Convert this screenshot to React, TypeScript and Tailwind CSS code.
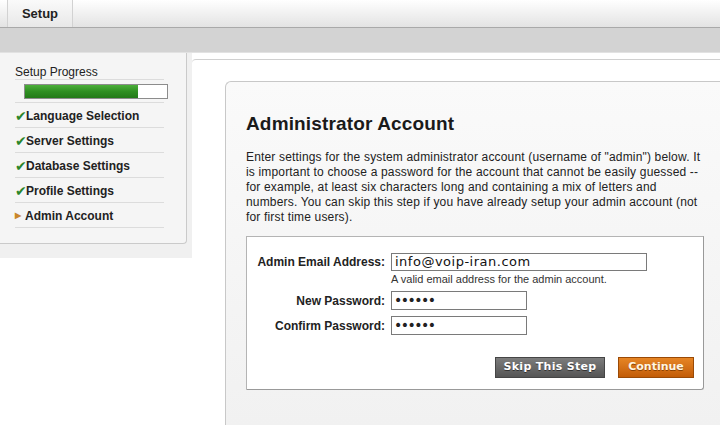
const steps = [
  { label: 'Language Selection', done: true },
  { label: 'Server Settings', done: true },
  { label: 'Database Settings', done: true },
  { label: 'Profile Settings', done: true },
  { label: 'Admin Account', done: false },
];

const arial = { fontFamily: '"Liberation Sans", Arial, sans-serif' };
const verdana = { fontFamily: '"DejaVu Sans", Verdana, sans-serif' };

export default function App() {
  return (
    <div className="flex h-[425px] w-[720px] flex-col overflow-hidden bg-white text-[#222]" style={arial}>
      <div className="flex h-[28px] shrink-0 border-b border-[#a9a9a9] bg-gradient-to-b from-white to-[#e3e3e3] pl-[7px]">
        <div className="flex w-[66px] items-center justify-center border-x border-[#d2d2d2] bg-gradient-to-b from-[#fafafa] to-[#e8e8e8] text-[13px] font-bold">
          Setup
        </div>
      </div>
      <div className="h-[25px] shrink-0 border-b border-[#e2e2e2] bg-[#d3d3d3]" />

      <div className="flex flex-1">
        <div className="w-[192px] shrink-0 self-start bg-[#f0f0f0] pb-[14px] pr-[5px]">
          <div className="rounded-br-[4px] border-b border-r border-[#cacaca] bg-[#f5f5f5] pb-[15px] pl-[15px] pr-[22px] pt-[2px]">
            <div className="flex h-[25px] items-end border-b border-[#dcdcdc] pb-[1px] text-[12px] leading-[12px]">Setup Progress</div>
            <div className="flex h-[23px] items-center border-b border-[#dcdcdc]">
              <div className="ml-[9px] flex h-[15px] w-[144px] shrink-0 border border-[#8c8c8c] bg-white">
                <div className="h-full w-[113px] bg-gradient-to-b from-[#4caf3a] via-[#2f8f22] to-[#237a18]" />
              </div>
            </div>
            {steps.map((step) => (
              <div key={step.label} className="flex h-[25px] items-center border-b border-[#dcdcdc] pt-[2px] text-[12px] font-bold">
                {step.done ? (
                  <span className="w-[11px] text-[14px] leading-none text-[#2a862a]" style={verdana}>✔</span>
                ) : (
                  <span className="w-[10px] text-[8px] leading-none text-[#c9862a]">▶</span>
                )}
                <span>{step.label}</span>
              </div>
            ))}
          </div>
        </div>

        <div className="flex-1 pt-[6px]">
          <div className="h-full rounded-tl-[4px] border-t border-[#d0d0d0] bg-white pl-[33px] pt-[21px]">
            <div className="h-full rounded-tl-[6px] border-l border-t border-[#c8c8c8] bg-gradient-to-b from-[#fafafa] to-[#f1f1f1] pl-[20px] pt-[30px]">
              <h1 className="text-[19px] font-bold leading-[24px] tracking-[0.15px] text-[#1a1a1a]">Administrator Account</h1>
              <p className="mt-[14px] w-[462px] text-[12px] leading-[15px] tracking-[0.17px] text-[#222]">
                Enter settings for the system administrator account (username of "admin") below. It is important to
                choose a password for the account that cannot be easily guessed -- for example, at least six characters
                long and containing a mix of letters and numbers. You can skip this step if you have already setup your
                admin account (not for first time users).
              </p>

              <div className="mt-[11px] w-[458px] rounded-br-[3px] border border-[#b4b4b4] border-r-[#999] border-b-[#999] bg-white pb-[11px] pt-[16px]">
                <div className="grid grid-cols-[138px_1fr] items-center gap-x-[6px]">
                  <label className="text-right text-[12px] font-bold">Admin Email Address:</label>
                  <input
                    readOnly
                    value="info@voip-iran.com"
                    className="h-[18px] w-[256px] border border-[#7a7a7a] px-[3px] text-[13px] tracking-[0.5px] text-[#111] outline-none"
                    style={verdana}
                  />
                  <div />
                  <div className="mt-[1px] h-[14px] text-[11px] leading-[14px] text-[#333]">
                    A valid email address for the admin account.
                  </div>
                  <label className="mt-[5px] text-right text-[12px] font-bold">New Password:</label>
                  <input
                    readOnly
                    type="password"
                    value="123456"
                    className="mt-[5px] h-[19px] w-[136px] border border-[#7a7a7a] px-[2px] text-[14px] tracking-[-1.5px] outline-none"
                    style={verdana}
                  />
                  <label className="mt-[6px] text-right text-[12px] font-bold">Confirm Password:</label>
                  <input
                    readOnly
                    type="password"
                    value="123456"
                    className="mt-[6px] h-[19px] w-[136px] border border-[#7a7a7a] px-[2px] text-[14px] tracking-[-1.5px] outline-none"
                    style={verdana}
                  />
                </div>

                <div className="mt-[22px] flex justify-end gap-[13px] pr-[9px]">
                  <button
                    type="button"
                    className="h-[21px] w-[110px] border border-[#454545] bg-gradient-to-b from-[#7c7c7c] to-[#555] text-[11px] font-bold tracking-[0.3px] text-white [text-shadow:0_1px_0_#333]"
                    style={verdana}
                  >
                    Skip This Step
                  </button>
                  <button
                    type="button"
                    className="h-[21px] w-[76px] border border-[#9a4a06] bg-gradient-to-b from-[#e68524] to-[#c25c06] text-[11px] font-bold text-[#fff6e2] [text-shadow:0_1px_0_#8a4000]"
                    style={verdana}
                  >
                    Continue
                  </button>
                </div>
              </div>
            </div>
          </div>
        </div>
      </div>
    </div>
  );
}
